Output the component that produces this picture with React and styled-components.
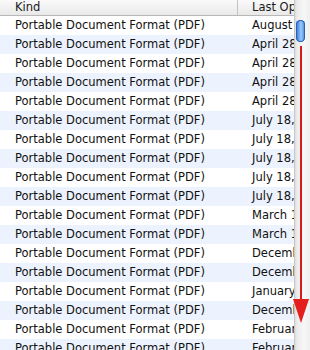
import styled, { createGlobalStyle } from "styled-components";

const GlobalStyle = createGlobalStyle`
	html, body {
		margin: 0;
		padding: 0;
		background: #ffffff;
		overflow: hidden;
	}
	body {
		font-family: "DejaVu Sans", "Liberation Sans", sans-serif;
	}
`;

const Frame = styled.div`
	display: flex;
	width: 310px;
	height: 350px;
	overflow: hidden;
	background: #fff;
`;

const Table = styled.div`
	flex: 1;
	min-width: 0;
	display: flex;
	flex-direction: column;
`;

const Header = styled.div`
	display: grid;
	grid-template-columns: 237px 1fr;
	height: 15px;
	flex-shrink: 0;
	background: linear-gradient(#fafafa, #e9e9e9);
	border-bottom: 1px solid #b8b8b8;
`;

const HeadCell = styled.div`
	padding-left: ${(p) => (p.$first ? "15px" : "14px")};
	border-left: ${(p) => (p.$first ? "none" : "1px solid #c4c4c4")};
	font-size: 11.5px;
	line-height: 15px;
	color: #1a1a1a;
	white-space: nowrap;
	overflow: hidden;
`;

const Row = styled.div`
	display: grid;
	grid-template-columns: 237px 1fr;
	height: 19px;
	flex-shrink: 0;
	background: ${(p) => (p.$odd ? "#edf3fe" : "#ffffff")};
`;

const Cell = styled.div`
	padding-left: 15px;
	font-size: 11.5px;
	line-height: 19px;
	color: #111;
	white-space: nowrap;
	overflow: hidden;
`;

const Scrollbar = styled.div`
	position: relative;
	width: 15px;
	flex-shrink: 0;
	background: linear-gradient(90deg, #dcdcdc 0, #ececec 2px, #f7f7f7 60%, #eeeeee 100%);
	border-left: 1px solid #c8c8c8;
`;

const Thumb = styled.div`
	position: absolute;
	left: 1px;
	top: 20px;
	width: 9px;
	height: 22px;
	border-radius: 5px;
	background: linear-gradient(90deg, #2f6fcf 0, #6aa9f2 35%, #9dcaf8 55%, #3f86e0 100%);
	box-shadow: inset 0 0 0 1px #2a5fb4;
`;

const Arrow = styled.svg`
	position: absolute;
	left: -8px;
	top: 0;
	overflow: visible;
`;

const dates = [
	"August 12, 2008",
	"April 28, 2008",
	"April 28, 2008",
	"April 28, 2008",
	"April 28, 2008",
	"July 18, 2008",
	"July 18, 2008",
	"July 18, 2008",
	"July 18, 2008",
	"July 18, 2008",
	"March 14, 2008",
	"March 14, 2008",
	"December 3, 2007",
	"December 3, 2007",
	"January 9, 2008",
	"December 3, 2007",
	"February 2, 2008",
	"February 2, 2008",
];

export default function App() {
	return (
		<>
			<GlobalStyle />
			<Frame>
				<Table>
					<Header>
						<HeadCell $first>Kind</HeadCell>
						<HeadCell>Last Opened</HeadCell>
					</Header>
					{dates.map((d, i) => (
						<Row key={i} $odd={i % 2 === 1}>
							<Cell>Portable Document Format (PDF)</Cell>
							<Cell>{d}</Cell>
						</Row>
					))}
				</Table>
				<Scrollbar>
					<Thumb />
					<Arrow width="30" height="350">
						<rect x="13" y="46" width="2" height="258" fill="#d61b1b" />
						<polygon points="6,299 22,299 14,323" fill="#e41d1d" />
					</Arrow>
				</Scrollbar>
			</Frame>
		</>
	);
}
